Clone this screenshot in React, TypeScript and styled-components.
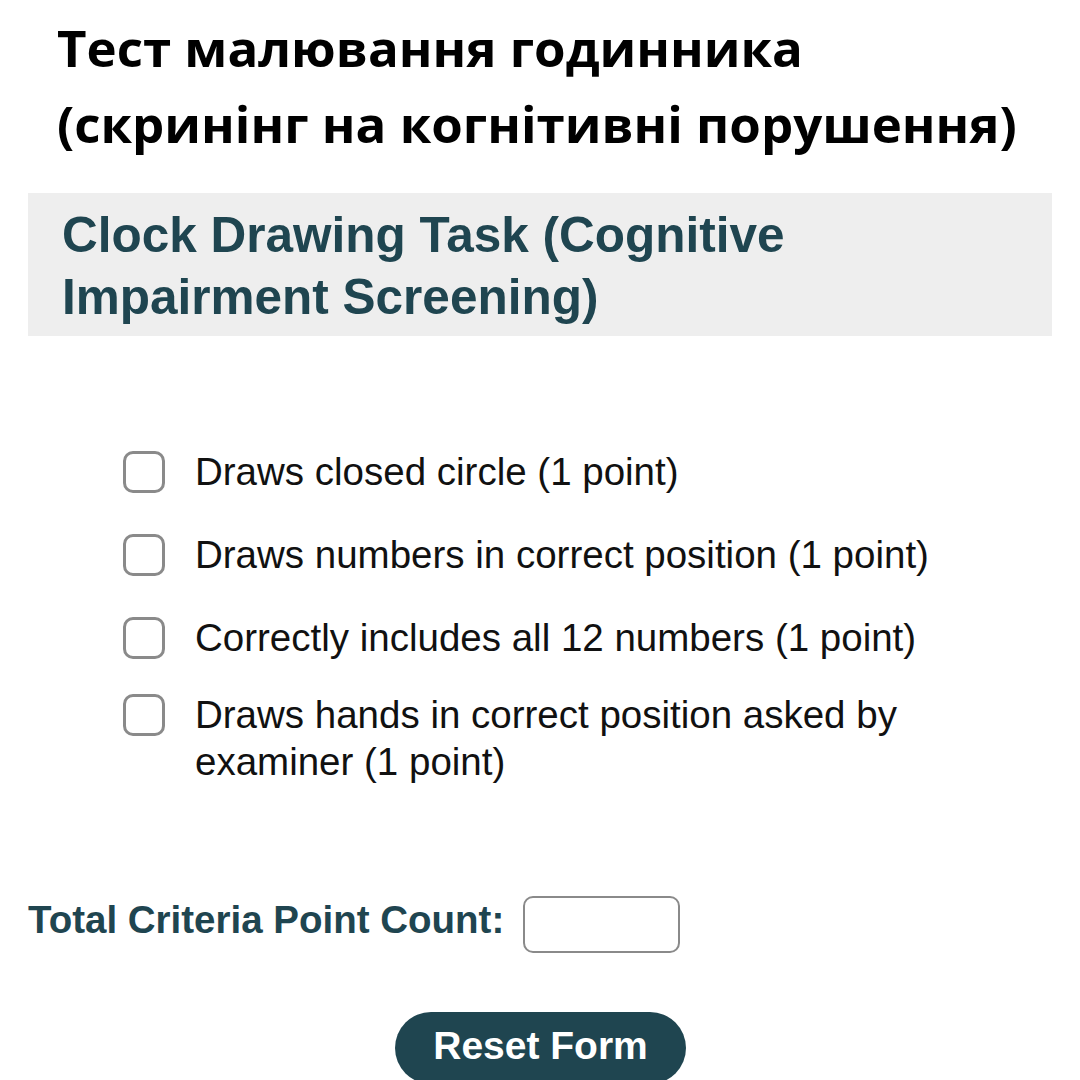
import React from "react";
import styled, { createGlobalStyle } from "styled-components";

const Global = createGlobalStyle`
  html, body { margin: 0; padding: 0; background: #ffffff; }
  body { font-family: "Liberation Sans", Arial, sans-serif; }
`;

const Page = styled.div`
  width: 1080px;
  height: 1080px;
  overflow: hidden;
  display: flex;
  flex-direction: column;
`;

const Title = styled.h1`
  margin: 0;
  padding: 9px 30px 0 57px;
  font-family: "Open Sans", "Noto Sans", sans-serif;
  font-weight: 700;
  font-size: 51px;
  line-height: 76px;
  color: #000;
`;

const Banner = styled.div`
  margin: 32px 28px 0 28px;
  background: #eeeeee;
  padding: 11px 34px 8px 34px;
`;

const BannerTitle = styled.h2`
  margin: 0;
  font-family: "Liberation Sans", Arial, sans-serif;
  font-weight: 700;
  font-size: 49.5px;
  line-height: 62px;
  color: #1f4550;
`;

const List = styled.div`
  margin: 112px 0 0 123px;
  display: flex;
  flex-direction: column;
  gap: 36px;
`;

const Row = styled.label<{ $tight?: boolean }>`
  display: flex;
  align-items: flex-start;
  gap: 30px;
  margin-top: ${(p) => (p.$tight ? "-6px" : "0")};
`;

const Box = styled.span`
  flex: none;
  box-sizing: border-box;
  width: 42px;
  height: 42px;
  margin-top: 3px;
  border: 3px solid #8a8a8a;
  border-radius: 10px;
  background: #fff;
`;

const RowText = styled.span`
  font-family: "Liberation Sans", Arial, sans-serif;
  font-size: 38.5px;
  line-height: 47px;
  color: #111;
  max-width: 770px;
`;

const Total = styled.div`
  margin: 111px 0 0 28px;
  display: flex;
  align-items: center;
  gap: 19px;
`;

const TotalLabel = styled.span`
  font-family: "Liberation Sans", Arial, sans-serif;
  font-weight: 700;
  font-size: 38.5px;
  color: #1f4550;
  margin-bottom: 10px;
`;

const TotalInput = styled.div`
  box-sizing: border-box;
  width: 157px;
  height: 57px;
  border: 2px solid #8a8a8a;
  border-radius: 10px;
  background: #fff;
`;

const ButtonWrap = styled.div`
  margin-top: 59px;
  display: flex;
  justify-content: center;
  padding-left: 1px;
`;

const ResetButton = styled.button`
  flex: none;
  width: 291px;
  height: 72px;
  border: none;
  border-radius: 36px;
  background: #1f4550;
  color: #fff;
  font-family: "Liberation Sans", Arial, sans-serif;
  font-weight: 700;
  font-size: 39px;
  padding: 0 0 4px 0;
`;

const items = [
  { text: "Draws closed circle (1 point)" },
  { text: "Draws numbers in correct position (1 point)" },
  { text: "Correctly includes all 12 numbers (1 point)" },
  { text: "Draws hands in correct position asked by examiner (1 point)", tight: true },
];

export default function App() {
  return (
    <Page>
      <Global />
      <Title>
        Тест малювання годинника
        <br />
        (скринінг на когнітивні порушення)
      </Title>
      <Banner>
        <BannerTitle>
          Clock Drawing Task (Cognitive
          <br />
          Impairment Screening)
        </BannerTitle>
      </Banner>
      <List>
        {items.map((it) => (
          <Row key={it.text} $tight={it.tight}>
            <Box />
            <RowText>{it.text}</RowText>
          </Row>
        ))}
      </List>
      <Total>
        <TotalLabel>Total Criteria Point Count:</TotalLabel>
        <TotalInput />
      </Total>
      <ButtonWrap>
        <ResetButton>Reset Form</ResetButton>
      </ButtonWrap>
    </Page>
  );
}
